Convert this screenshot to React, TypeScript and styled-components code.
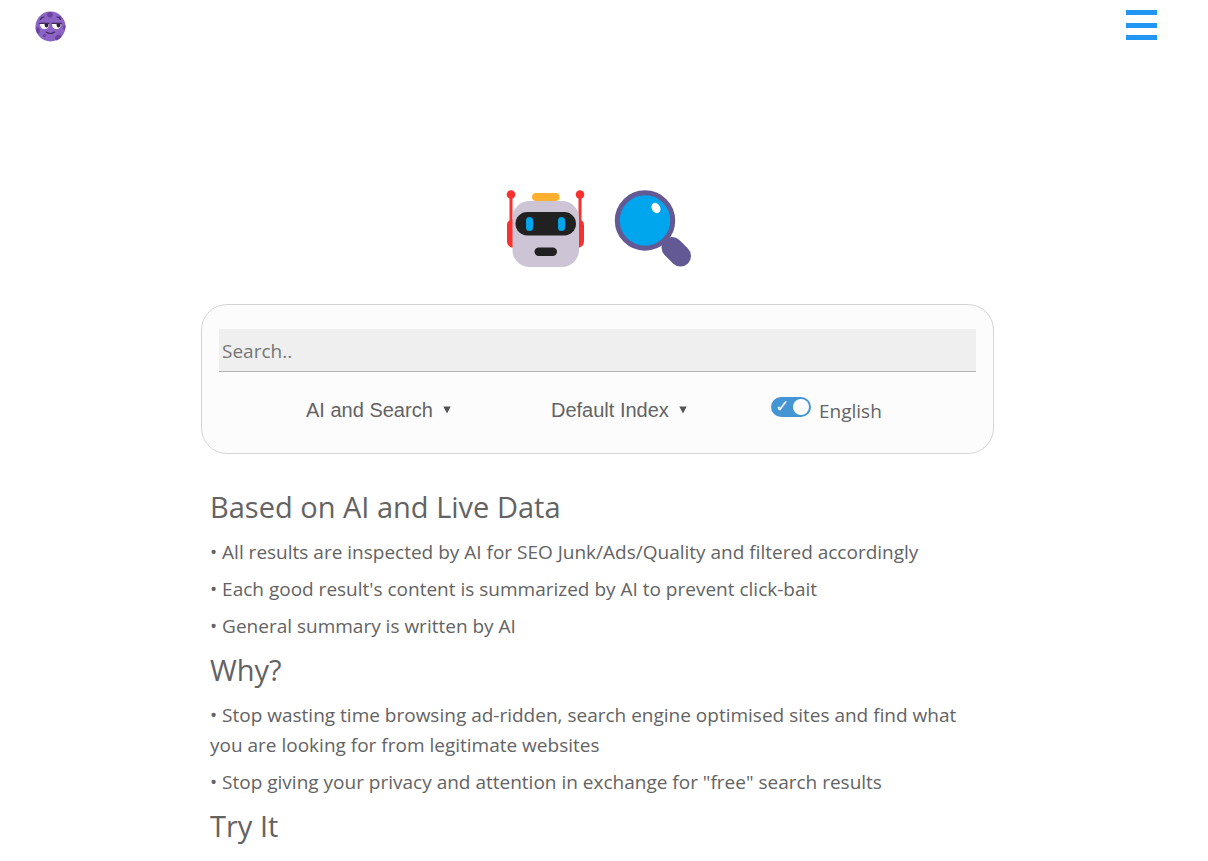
import React from "react";
import styled, { createGlobalStyle } from "styled-components";

const GlobalStyle = createGlobalStyle`
  * { box-sizing: border-box; }
  body {
    margin: 0;
    background: #fff;
    color: #636363;
    font-family: "Open Sans", "Segoe UI", sans-serif;
    font-size: 19px;
    line-height: 30px;
  }
`;

const Page = styled.div`
  height: 100vh;
  overflow: hidden;
  padding-right: 13px;
`;

const Header = styled.header`
  display: flex;
  justify-content: space-between;
  align-items: flex-start;
  padding: 10px 38px 0 35px;
  height: 60px;
`;

const HomeLink = styled.a`
  display: block;
  padding-top: 1px;
  line-height: 0;
`;

const MenuButton = styled.button`
  display: flex;
  flex-direction: column;
  justify-content: space-between;
  height: 30px;
  padding: 0;
  width: 31px;
  border: 0;
  background: none;
  cursor: pointer;
`;

const MenuBar = styled.span`
  display: block;
  width: 100%;
  height: 5px;
  background: #2196f3;
`;

const Main = styled.main`
  width: 100%;
  max-width: 793px;
  margin: 0 auto;
`;

const Emblems = styled.div`
  display: flex;
  justify-content: center;
  gap: 28px;
  padding: 129px 0 37px 2px;
  line-height: 0;
`;

const SearchCard = styled.form`
  padding: 24px 17px 27px;
  border: 1px solid #d5d5d5;
  border-radius: 26px;
  background: #fcfcfc;
`;

const SearchInput = styled.input`
  display: block;
  width: 100%;
  height: 43px;
  padding: 2px 3px 0;
  border: 0;
  border-bottom: 1px solid #b3b3b3;
  border-radius: 0;
  background: #efefef;
  color: #636363;
  font: inherit;
  outline: none;
  &::placeholder { color: #757575; opacity: 1; }
`;

const Options = styled.div`
  display: grid;
  grid-template-columns: 245fr 220fr 205fr;
  align-items: start;
  padding: 23px 0 0 87px;
`;

const SelectField = styled.label`
  display: flex;
  align-items: center;
  gap: 8px;
`;

const Select = styled.select`
  appearance: none;
  field-sizing: content;
  height: 30px;
  padding: 0;
  border: 0;
  background: none;
  color: #636363;
  font-family: "Liberation Sans", Arial, sans-serif;
  font-size: 20px;
  line-height: 30px;
`;

const Arrow = styled.svg`
  display: block;
  width: 8px;
  height: 8px;
  margin-left: 2px;
  fill: #555;
`;

const Toggle = styled.label`
  display: flex;
  align-items: flex-start;
  gap: 8px;
`;

const Switch = styled.input`
  appearance: none;
  display: grid;
  grid-template-columns: 1fr 1fr;
  align-items: center;
  justify-items: center;
  width: 40px;
  height: 20px;
  margin: 2px 0 0;
  padding: 0 1px 0 2px;
  border-radius: 10px;
  background: #4495d4;
  &::before {
    content: "✓";
    color: #fff;
    padding-bottom: 2px;
    font: 17px/18px "DejaVu Sans", sans-serif;
  }
  &::after {
    content: "";
    width: 16px;
    height: 16px;
    border-radius: 50%;
    background: #fff;
  }
`;

const ToggleText = styled.span`
  padding-top: 1px;
`;

const About = styled.section`
  padding: 30px 9px 0;
`;

const Heading = styled.h2`
  margin: 0;
  font-size: 29px;
  font-weight: 400;
  line-height: 46px;
`;

const Points = styled.ul`
  margin: 0;
  padding: 0;
  list-style: none;
`;

const Point = styled.li`
  padding: 7px 0 0;
  &:last-child { padding-bottom: 6px; }
`;

const sections = [
  {
    title: "Based on AI and Live Data",
    points: [
      "All results are inspected by AI for SEO Junk/Ads/Quality and filtered accordingly",
      "Each good result's content is summarized by AI to prevent click-bait",
      "General summary is written by AI",
    ],
  },
  {
    title: "Why?",
    points: [
      "Stop wasting time browsing ad-ridden, search engine optimised sites and find what you are looking for from legitimate websites",
      'Stop giving your privacy and attention in exchange for "free" search results',
    ],
  },
  { title: "Try It", points: [] },
];

function MoonFace() {
  return (
    <svg width="31" height="31" viewBox="0 0 31 31" aria-hidden="true">
      <circle cx="15.5" cy="15.500" r="15" fill="#8b64c6" />
      <g fill="#6a449f">
        <circle cx="15" cy="3.800" r="2.800" />
        <circle cx="24.500" cy="6" r="1.200" />
        <path d="M1 16q4 0 4 4q0 2-2 3Q0 20 1 16Z" />
        <path d="M20 27q1-4 5-3.500q2 .5 1.500 2.500q-2.500 3-5 3.500Q20 29 20 27Z" />
        <circle cx="9.500" cy="24.500" r="1.500" />
        <path d="M30.400 14q-2 0-2.500 2t2 3Q30.800 16 30.400 14Z" />
      </g>
      <path d="M5 12.500h9q0 5.500-4.500 5.500T5 12.500ZM17 12.500h9q0 5.500-4.500 5.500T17 12.500Z" fill="#fff" />
      <path d="M9.500 12.500h4q0 4-2 4T9.500 12.500ZM21.500 12.500h4q0 4-2 4T21.500 12.500Z" fill="#321b41" />
      <path d="M4.500 12.300h9.500M17 12.300h9.500M5.500 8.500q1-2.500 3.500-2.500M22 6q2.500 0 3.500 2.500M11 21q4.500 3 8.500 0" stroke="#402a56" strokeWidth="1.200" fill="none" strokeLinecap="round" />
    </svg>
  );
}

function Robot() {
  return (
    <svg width="80" height="78" viewBox="0 0 80 78" aria-hidden="true">
      <g transform="translate(.5 0)">
        <g fill="#f8312f">
          <circle cx="5.500" cy="5.500" r="4.300" />
          <circle cx="74.500" cy="5.500" r="4.300" />
          <path d="M4 5h3v30H4ZM73 5h3v30h-3Z" />
          <path d="M8 30v29q-6.500-1-6.500-7V36q0-5 6.500-6ZM72 30v29q6.500-1 6.500-7V36q0-5-6.500-6Z" />
        </g>
        <rect x="26.500" y="4" width="27.500" height="8" rx="4" fill="#ffb02e" />
        <rect x="7" y="12" width="66.500" height="66" rx="17" fill="#cdc4d6" />
        <rect x="10" y="23" width="60.500" height="23.500" rx="11.700" fill="#212121" />
        <rect x="20.500" y="28" width="7" height="14" rx="3.500" fill="#00a6ed" />
        <rect x="52.500" y="28" width="7" height="14" rx="3.500" fill="#00a6ed" />
        <rect x="29" y="58.500" width="22.500" height="8.500" rx="4.200" fill="#212121" />
      </g>
    </svg>
  );
}

function Magnifier() {
  return (
    <svg width="80" height="78" viewBox="0 0 80 78" aria-hidden="true">
      <path d="M47 50 67 69" stroke="#635994" strokeWidth="6" />
      <path d="m59 58.500 8.500 8.500" stroke="#635994" strokeWidth="21" strokeLinecap="round" />
      <circle cx="32" cy="31.500" r="27.700" fill="#00a6ed" stroke="#635994" strokeWidth="5" />
      <ellipse cx="43" cy="19" rx="4.200" ry="5.500" transform="rotate(-28 43 19)" fill="#fff" />
    </svg>
  );
}

function Dropdown({ label, option }: { label: string; option: string }) {
  return (
    <SelectField>
      <Select aria-label={label} defaultValue={option}>
        <option>{option}</option>
      </Select>
      <Arrow viewBox="0 0 8 8" aria-hidden="true">
        <path d="M0.300 0.500h7.400L4 7.500Z" />
      </Arrow>
    </SelectField>
  );
}

export default function App() {
  return (
    <>
      <GlobalStyle />
      <Page>
        <Header>
          <HomeLink href="#" aria-label="Home">
            <MoonFace />
          </HomeLink>
          <MenuButton type="button" aria-label="Menu">
            <MenuBar />
            <MenuBar />
            <MenuBar />
          </MenuButton>
        </Header>
        <Main>
          <Emblems>
            <Robot />
            <Magnifier />
          </Emblems>
          <SearchCard>
            <SearchInput type="text" placeholder="Search.." aria-label="Search" />
            <Options>
              <Dropdown label="Mode" option="AI and Search" />
              <Dropdown label="Index" option="Default Index" />
              <Toggle>
                <Switch type="checkbox" defaultChecked />
                <ToggleText>English</ToggleText>
              </Toggle>
            </Options>
          </SearchCard>
          <About>
            {sections.map(({ title, points }) => (
              <React.Fragment key={title}>
                <Heading>{title}</Heading>
                <Points>
                  {points.map((point) => (
                    <Point key={point}>{`• ${point}`}</Point>
                  ))}
                </Points>
              </React.Fragment>
            ))}
          </About>
        </Main>
      </Page>
    </>
  );
}
